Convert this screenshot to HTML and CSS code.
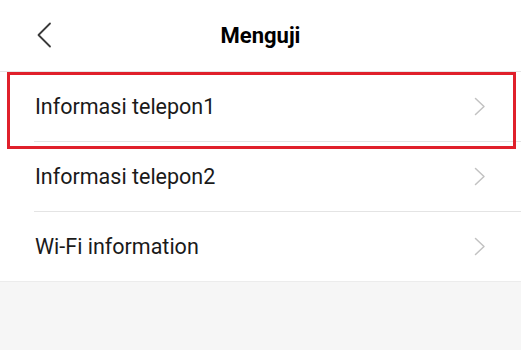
FILE: index.html
```html
<!DOCTYPE html>
<html lang="id">
<head>
<meta charset="utf-8">
<title>Menguji</title>
<link rel="stylesheet" href="styles.css">
</head>
<body>
<div class="screen">
  <header class="topbar">
    <button class="back" aria-label="Kembali">
      <svg width="16" height="26" viewBox="0 0 16 26"><path d="M14 1.5 L2.5 13 L14 24.5" fill="none" stroke="#3a3a3a" stroke-width="1.8" stroke-linecap="round" stroke-linejoin="round"/></svg>
    </button>
    <h1 class="title">Menguji</h1>
  </header>
  <ul class="list">
    <li class="row">
      <span class="label">Informasi telepon1</span>
      <svg class="chev" width="12" height="19" viewBox="0 0 12 19"><path d="M1.5 1.5 L10 9.5 L1.5 17.5" fill="none" stroke="#c2c2c2" stroke-width="1.5" stroke-linecap="round" stroke-linejoin="round"/></svg>
    </li>
    <li class="row">
      <span class="label">Informasi telepon2</span>
      <svg class="chev" width="12" height="19" viewBox="0 0 12 19"><path d="M1.5 1.5 L10 9.5 L1.5 17.5" fill="none" stroke="#c2c2c2" stroke-width="1.5" stroke-linecap="round" stroke-linejoin="round"/></svg>
    </li>
    <li class="row">
      <span class="label">Wi-Fi information</span>
      <svg class="chev" width="12" height="19" viewBox="0 0 12 19"><path d="M1.5 1.5 L10 9.5 L1.5 17.5" fill="none" stroke="#c2c2c2" stroke-width="1.5" stroke-linecap="round" stroke-linejoin="round"/></svg>
    </li>
  </ul>
  <div class="highlight"></div>
  <div class="rest"></div>
</div>
</body>
</html>
```
FILE: styles.css
```css
html, body {
  margin: 0;
  padding: 0;
  background: #f6f6f6;
}
body {
  font-family: Roboto, "Noto Sans", "Liberation Sans", sans-serif;
  color: #1a1a1a;
}
.screen {
  position: relative;
  width: 521px;
  height: 350px;
  overflow: hidden;
  display: flex;
  flex-direction: column;
}
.topbar {
  position: relative;
  height: 71px;
  background: #fff;
  border-bottom: 1px solid #e6e6e6;
  display: flex;
  align-items: center;
  justify-content: center;
}
.back {
  position: absolute;
  left: 36px;
  top: 22px;
  padding: 0;
  border: 0;
  background: none;
  display: flex;
}
.title {
  margin: 0;
  font-size: 22px;
  font-weight: 700;
  color: #000;
}
.list {
  list-style: none;
  margin: 0;
  padding: 0;
  background: #fff;
  border-bottom: 1px solid #ececec;
}
.row {
  height: 69px;
  margin-left: 34px;
  padding-right: 35px;
  display: flex;
  align-items: center;
  justify-content: space-between;
  border-bottom: 1px solid #e4e4e4;
}
.row:last-child {
  border-bottom: 0;
}
.label {
  font-size: 21.5px;
  margin-left: 1px;
}
.chev {
  display: block;
}
.highlight {
  position: absolute;
  left: 7px;
  top: 72px;
  width: 503px;
  height: 71px;
  border: 3px solid #e0202b;
}
.rest {
  flex: 1;
  background: #f6f6f6;
}
```
